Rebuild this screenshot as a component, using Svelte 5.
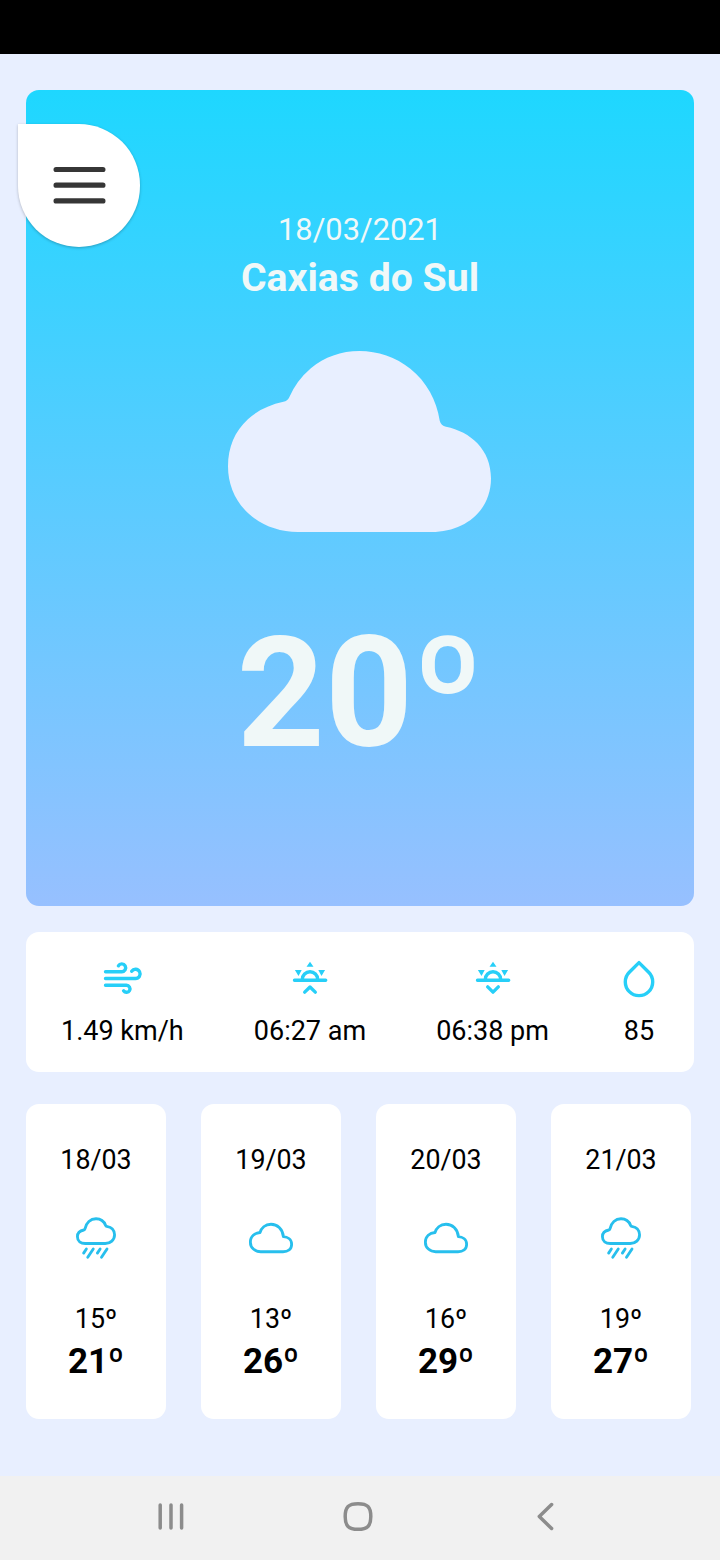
<script>
  const conditions = [
    { icon: 'wind', value: '1.49 km/h' },
    { icon: 'sunrise', value: '06:27 am' },
    { icon: 'sunset', value: '06:38 pm' },
    { icon: 'drop', value: '85' }
  ];
  const forecast = [
    { date: '18/03', icon: 'rain', min: 15, max: 21 },
    { date: '19/03', icon: 'cloud', min: 13, max: 26 },
    { date: '20/03', icon: 'cloud', min: 16, max: 29 },
    { date: '21/03', icon: 'rain', min: 19, max: 27 }
  ];
</script>

<div class="screen">
  <div class="status"></div>

  <main>
    <button class="menu" aria-label="Menu">
      <svg width="54" height="42" viewBox="0 0 54 42">
        <path d="M4.1 4.500H50.900M4.100 20.200H50.900M4.100 35.900H50.900" />
      </svg>
    </button>

    <section class="hero">
      <div class="date">18/03/2021</div>
      <div class="city">Caxias do Sul</div>
      <svg class="sky" width="263" height="181" viewBox="0 80 512 352" preserveAspectRatio="none">
        <path d="M396 432H136c-36.44 0-70.36-12.57-95.51-35.41C14.38 372.88 0 340 0 304c0-36.58 13.39-68.12 38.72-91.22 18.11-16.53 42.22-28.25 69.18-33.87a16 16 0 0 0 11.37-9.15 156.24 156.24 0 0 1 42.05-56.42C187.76 91.69 220.5 80 256 80c35 0 71 12 99 34.500 32 26 51 61 57.200 101a16 16 0 0 0 12.200 11.700C472 237 512 271 512 328c0 61-49 104-116 104z" />
      </svg>
      <div class="temp">20º</div>
    </section>

    <section class="conditions">
      {#each conditions as c}
        <div class="condition">
          <svg width="40" height="40" viewBox="0 0 40 40">
            {#if c.icon === 'wind'}
              <path d="M3.500 12.700H19.700a3.900 3.900 0 1 0-3.300-5.900M3.500 19.500H33.500a4.600 4.600 0 1 0-3.800-7.200M3.500 26.300H24.500a3.500 3.500 0 1 1-2.900 5.500" />
            {:else if c.icon === 'drop'}
              <path d="M20 3.600l9.700 9.700a13.700 13.700 0 1 1-19.400 0z" />
            {:else}
              <path d="M4.500 21.300H35.700M12.300 21.300v-.800a7.700 7.700 0 0 1 15.400 0v.800" />
              <path class="ray" d="M20 2.700l3.500 5h-7zM4.900 11h6.800l-3.200 6zM28.300 11h6.800l-3.600 6z" />
              {#if c.icon === 'sunrise'}
                <path d="M14.700 33.100L20 28l5.300 5.100" />
              {:else}
                <path d="M14.700 27.900L20 33.100l5.300-5.200" />
              {/if}
            {/if}
          </svg>
          <span>{c.value}</span>
        </div>
      {/each}
    </section>

    <section class="forecast">
      {#each forecast as day}
        <article>
          <span class="day">{day.date}</span>
          <svg width="44" height="44" viewBox="0 0 512 512">
            {#if day.icon === 'rain'}
              <path d="M114.610 162.850A16.070 16.070 0 0 0 128 149.600C140.090 76.170 193.180 32 256 32c57.930 0 96.620 37.750 112.200 77.740a15.840 15.840 0 0 0 12.200 9.870c50 8.150 91.600 41.540 91.600 99.590 0 59.400-48.600 100.800-108 100.800H130c-49.500 0-90-24.700-90-79.200 0-48.470 38.670-72.220 74.610-77.950zM144 384l-32 48M224 384l-64 96M304 384l-32 48M384 384l-64 96" />
            {:else}
              <path d="M400 240c-8.890-89.540-71-144-144-144-69 0-113.440 48.200-128 96-60 6-112 43.590-112 112 0 66 54 112 120 112h260c55 0 100-27.440 100-88 0-59.820-53-85.760-96-88z" />
            {/if}
          </svg>
          <span class="min">{day.min}º</span>
          <span class="max">{day.max}º</span>
        </article>
      {/each}
    </section>
  </main>

  <nav>
    <svg width="40" height="40" viewBox="0 0 40 40"><path d="M9.200 8.900V32M20 8.900V32M30.600 8.900V32" /></svg>
    <svg width="40" height="40" viewBox="0 0 40 40"><path d="M20 7.700C29.500 7.700 32.800 11 32.800 20.500S29.500 33.300 20 33.300 7.200 30 7.200 20.500 10.500 7.700 20 7.700z" /></svg>
    <svg width="40" height="40" viewBox="0 0 40 40"><path d="M26.600 8.500L14.300 20.500l12.300 12" /></svg>
  </nav>
</div>

<style>
  :global(body) { margin: 0; }
  .screen {
    width: 720px;
    height: 1560px;
    display: flex;
    flex-direction: column;
    background: #e8efff;
    font-family: Roboto, sans-serif;
    color: #000;
    overflow: hidden;
  }
  .status { height: 54px; background: #000; flex: none; }
  main {
    position: relative;
    flex: 1;
    box-sizing: border-box;
    padding: 36px 26px 0;
  }
  svg { display: block; overflow: visible; flex: none; }
  path { fill: none; stroke-linecap: round; stroke-linejoin: round; }
  .menu {
    position: absolute;
    left: 18px;
    top: 70px;
    width: 122px;
    height: 123px;
    padding: 0;
    border: 0;
    border-radius: 0 61px 61px 61px;
    background: #fff;
    box-shadow: 0 1px 3px rgba(0, 0, 0, 0.25);
    display: flex;
    align-items: center;
    justify-content: center;
  }
  .menu path { stroke: #363636; stroke-width: 5.2; }
  .hero {
    height: 816px;
    box-sizing: border-box;
    padding-top: 121px;
    border-radius: 13px;
    background: linear-gradient(#1ed7ff, #97c0ff);
    color: #f0f8f8;
    display: flex;
    flex-direction: column;
    align-items: center;
  }
  .date { font-size: 30.800px; line-height: 38px; }
  .city { font-size: 39.2px; line-height: 48px; margin-top: 5px; font-weight: 700; }
  .sky { margin: 49px 2px 0 0; }
  .sky path { fill: #e8efff; }
  .temp { font-size: 153.500px; line-height: 184px; font-weight: 700; margin-top: 70px; }
  .conditions {
    height: 140px;
    box-sizing: border-box;
    margin-top: 26px;
    padding-top: 27px;
    border-radius: 13px;
    background: #fff;
    display: flex;
    justify-content: space-around;
  }
  .condition {
    display: flex;
    flex-direction: column;
    align-items: center;
    font-size: 27px;
    line-height: 32px;
    gap: 16px;
  }
  .condition path { stroke: #27cff8; stroke-width: 3.4; }
  .condition .ray { fill: #27cff8; stroke: none; }
  .forecast {
    margin-top: 32px;
    display: grid;
    grid-template-columns: repeat(4, 140px);
    gap: 35px;
  }
  article {
    height: 315px;
    box-sizing: border-box;
    padding-top: 40px;
    border-radius: 13px;
    background: #fff;
    display: flex;
    flex-direction: column;
    align-items: center;
  }
  article path { stroke: #27bfed; stroke-width: 33; }
  .day, .min { font-size: 26.800px; line-height: 32px; }
  article svg { margin: 39.500px 0 43.500px; }
  .max { font-size: 35px; line-height: 42px; font-weight: 700; margin-top: 6px; }
  nav {
    height: 84px;
    box-sizing: border-box;
    padding: 0 82px 4px 77px;
    flex: none;
    background: #f1f1f1;
    display: grid;
    grid-template-columns: repeat(3, 187px);
    align-items: center;
    justify-items: center;
  }
  nav path { stroke: #8c8c8c; stroke-width: 3.5; }
</style>
